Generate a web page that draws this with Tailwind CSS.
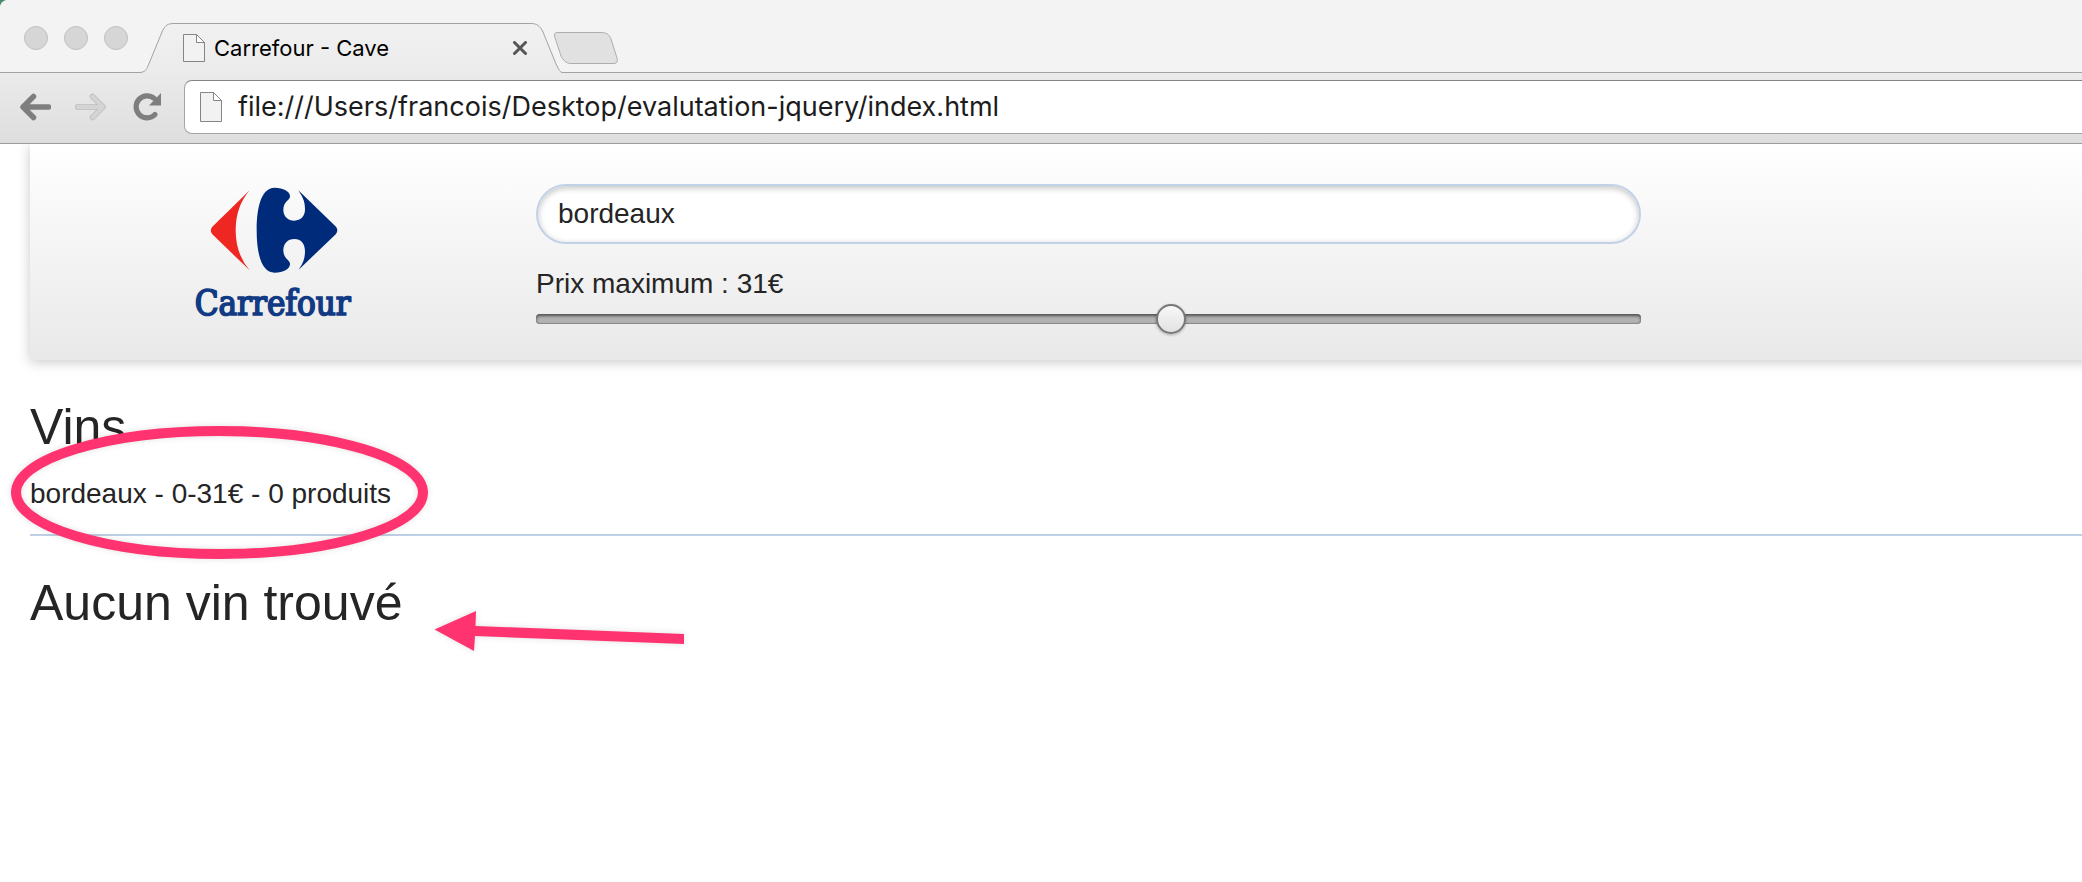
<!DOCTYPE html>
<html lang="fr">
<head>
<meta charset="utf-8">
<title>Carrefour - Cave</title>
<script src="https://cdn.jsdelivr.net/npm/@tailwindcss/browser@4"></script>
</head>
<body class="bg-[#4d8a6c] font-['Liberation_Sans',Arial,sans-serif] text-[#252525]">
<div class="relative flex min-h-screen flex-col overflow-hidden rounded-tl-lg bg-white">

  <!-- Browser chrome -->
  <header class="relative z-10 font-[Inter,sans-serif]">
    <div class="flex h-[73px] border-b border-[#a2a2a2] bg-[#f3f3f3]">
      <div class="flex gap-4 pt-[26px] pl-6">
        <button aria-label="Fermer" class="size-6 rounded-full border border-[#c0c0c0] bg-[#d6d6d6]"></button>
        <button aria-label="Réduire" class="size-6 rounded-full border border-[#c0c0c0] bg-[#d6d6d6]"></button>
        <button aria-label="Agrandir" class="size-6 rounded-full border border-[#c0c0c0] bg-[#d6d6d6]"></button>
      </div>
      <div class="relative mt-[23px] ml-3 flex h-[50px] w-[425px] items-center pl-[43px]">
        <svg class="absolute inset-0" width="425" height="50" viewBox="0 0 425 50" fill="none">
          <defs><linearGradient id="tab" x1="0" y1="0" x2="0" y2="1"><stop stop-color="#f1f1f1"/><stop offset="1" stop-color="#ebebeb"/></linearGradient></defs>
          <path d="M0 50V49.500C5 49 6 47 8 43L22 9C25 2 28 .5 34 .5H391C397 .5 400 3 403 9L416 41C419 47 420 49.500 423 49.500V50Z" fill="url(#tab)"/>
          <path d="M0 49.500C5 49 6 47 8 43L22 9C25 2 28 .5 34 .5H391C397 .5 400 3 403 9L416 41C419 47 420 49.500 423 49.500" stroke="#a2a2a2"/>
        </svg>
        <svg class="relative shrink-0" width="22" height="28" viewBox="0 0 22 28"><path d="M.5.5H13.500L21.500 8.500V27.500H.5Z" fill="#f2f2f2" stroke="#858585"/><path d="M13.500.5V8.500H21.500Z" fill="#fff" stroke="#858585"/></svg>
        <span class="relative ml-[9px] flex-1 text-[22px] text-black">Carrefour - Cave</span>
        <button aria-label="Fermer l’onglet" class="relative mr-[38px]"><svg width="14" height="14" viewBox="0 0 14 14"><path d="M1.500 1.500L12.500 12.500M12.500 1.500L1.500 12.500" stroke="#555" stroke-width="3" stroke-linecap="round"/></svg></button>
      </div>
      <button aria-label="Nouvel onglet" class="-ml-[11px] self-start pt-8">
        <svg width="64" height="32" viewBox="0 0 64 32"><path d="M3 .5H47C52 .5 55 2 57 7L63 26C64 29 63 31.500 60 31.500H17C12 31.500 9 28 7 24L.8 5C0 2 1 .5 3 .5Z" fill="#e1e1e1" stroke="#adadad"/></svg>
      </button>
    </div>
    <div class="flex h-[71px] items-center border-b border-[#9d9d9d] bg-linear-to-b from-[#ebebeb] to-[#dedede] pb-0.5 pl-5">
      <button aria-label="Précédent"><svg width="31" height="28" viewBox="0 0 31 28" fill="none" stroke="#7e7e7e" stroke-width="5.500" stroke-linecap="round" stroke-linejoin="round"><path d="M28.500 14H4M13.500 3.500L3 14L13.500 24.500"/></svg></button>
      <button aria-label="Suivant" class="ml-6"><svg width="31" height="28" viewBox="0 0 31 28" fill="none" stroke-linecap="round" stroke-linejoin="round"><path d="M2.500 14H27M17.500 3.500L28 14L17.500 24.500" stroke="#bcbcbc" stroke-width="5.500"/><path d="M2.500 14H27M17.500 3.500L28 14L17.500 24.500" stroke="#d4d4d4" stroke-width="4"/></svg></button>
      <button aria-label="Actualiser" class="ml-7"><svg class="overflow-visible" width="28" height="28" viewBox="0 0 28 28" fill="none"><path d="M20.500 5.700A11 11 0 1 0 21 21.500" stroke="#7e7e7e" stroke-width="5.200" stroke-linecap="round"/><path d="M27 0V12.500H15Z" fill="#7e7e7e"/></svg></button>
      <div class="ml-[22px] flex h-[54px] flex-1 items-center rounded-l-lg border border-r-0 border-[#a5a5a5] border-t-[#858585] bg-white pl-[15px]">
        <svg class="shrink-0" width="22" height="30" viewBox="0 0 22 30"><path d="M.5.5H13.500L21.500 8.500V29.500H.5Z" fill="#f2f2f2" stroke="#858585"/><path d="M13.500.5V8.500H21.500Z" fill="#fff" stroke="#858585"/></svg>
        <input type="text" aria-label="Adresse" value="file:///Users/francois/Desktop/evalutation-jquery/index.html" class="ml-4 w-full bg-transparent text-[27px] text-[#1c1c1c] outline-none">
      </div>
    </div>
  </header>

  <!-- Page -->
  <main class="flex-1 pl-[30px]">
    <div class="-mr-4 grid h-[216px] grid-cols-[506fr_1105fr_457fr] bg-linear-to-b from-white to-[#e9e9e9] pt-10 shadow-[0_2px_12px_rgba(0,0,0,0.22)]">
      <a href="#" aria-label="Carrefour" class="ml-[164px] self-start">
        <svg class="overflow-visible" width="164" height="144" viewBox="72 42 492 432">
          <path d="M239 61L127 170Q118 181 127 193L239 301Q197 252 197 181Q197 110 239 61Z" fill="#ee2722"/>
          <path d="M314 53C340 53 361 64 360 80C359 91 340 94 340 120C340 139 354 152 373 152C393 152 405 138 405 118C405 91 396 79 385 61L498 170Q506 181 498 192L386 299C396 284 405 270 405 243C405 221 393 207 373 207C353 207 340 221 340 241C340 265 359 270 360 281C361 297 340 308 314 308C278 308 260 261 260 181C260 101 278 53 314 53Z" fill="#002b7b"/>
          <text x="74" y="434" font-family="DejaVu Serif Condensed, DejaVu Serif, serif" font-size="104" fill="#103a84" stroke="#103a84" stroke-width="5">Carrefour</text>
        </svg>
      </a>
      <div class="flex flex-col">
        <input type="search" aria-label="Rechercher un vin" value="bordeaux" class="h-[60px] w-full appearance-none rounded-full border-2 border-[#c2d2e6] bg-white px-5 text-[28px] shadow-[inset_0_2px_6px_rgba(0,0,0,0.24)] outline-none">
        <label for="prix" class="mt-5 text-[28px] leading-10">Prix maximum : 31€</label>
        <input id="prix" type="range" min="1" max="53" value="31" class="m-0 h-[30px] w-full appearance-none bg-transparent outline-none [&::-webkit-slider-runnable-track]:h-[10px] [&::-webkit-slider-runnable-track]:rounded-[4px] [&::-webkit-slider-runnable-track]:bg-[#b2b2b2] [&::-webkit-slider-runnable-track]:shadow-[inset_0_2px_3px_#505050,inset_0_-1px_1px_#888888] [&::-webkit-slider-thumb]:-mt-[10px] [&::-webkit-slider-thumb]:size-[30px] [&::-webkit-slider-thumb]:appearance-none [&::-webkit-slider-thumb]:rounded-full [&::-webkit-slider-thumb]:border-2 [&::-webkit-slider-thumb]:border-[#777777] [&::-webkit-slider-thumb]:bg-linear-to-b [&::-webkit-slider-thumb]:from-[#f8f8f8] [&::-webkit-slider-thumb]:to-[#e2e2e2] [&::-webkit-slider-thumb]:shadow-[0_1px_3px_rgba(0,0,0,0.3)]">
      </div>
    </div>
    <h1 class="mt-8 text-[50px] leading-[70px]">Vins</h1>
    <p class="mt-3 border-b-2 border-[#c0d0e4] pb-5 text-[28px] leading-10">bordeaux - 0-31€ - 0 produits</p>
    <h2 class="mt-8 text-[50px] leading-[70px]">Aucun vin trouvé</h2>
  </main>

  <!-- Hand-drawn annotations over the page -->
  <svg class="pointer-events-none absolute top-[410px] left-0 z-20 drop-shadow-[0_0_3px_rgba(0,0,0,0.12)]" width="700" height="260" viewBox="0 410 700 260" aria-hidden="true">
    <ellipse cx="219.500" cy="492.500" rx="203.500" ry="61.500" fill="none" stroke="#fe336f" stroke-width="10"/>
    <path d="M434.500 629.500L476 611L475.500 626L684 634V644L475 636L474 651Z" fill="#fe336f"/>
  </svg>
</div>
</body>
</html>
